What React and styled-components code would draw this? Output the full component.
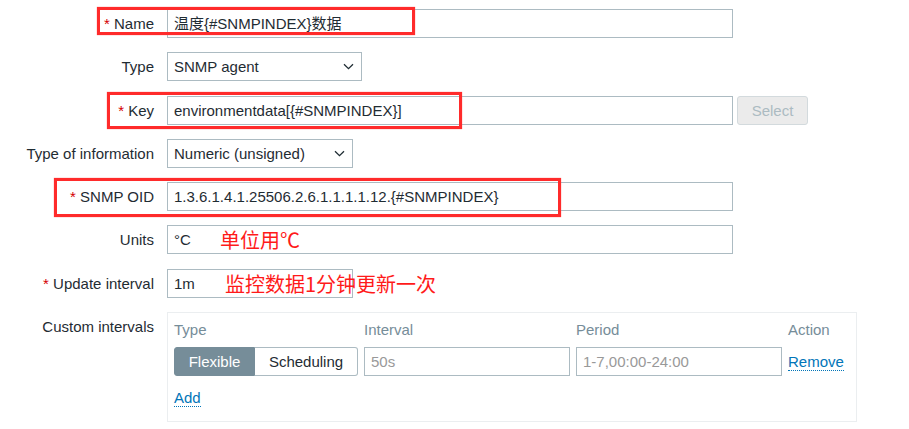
import React from "react";
import styled, { createGlobalStyle } from "styled-components";

const GlobalStyle = createGlobalStyle`
  body {
    margin: 0;
    background: #ffffff;
    font-family: "Liberation Sans", Arial, "Noto Sans CJK SC", sans-serif;
    font-size: 15px;
    color: #1f2c33;
  }
`;

const Chevron = () => (
  <svg width="11" height="7" viewBox="0 0 11 7">
    <path d="M1 1.2 L5.5 5.6 L10 1.2" fill="none" stroke="#1f2c33" strokeWidth="1.3" />
  </svg>
);

export default function App() {
  return (
    <>
      <GlobalStyle />
      <Form>
        <Row>
          <Label required>Name</Label>
          <Input w={566}>温度{"{#SNMPINDEX}"}数据</Input>
          <Mark left={97} top={-2} w={318} h={28} />
        </Row>
        <Row>
          <Label>Type</Label>
          <Select w={195}>
            SNMP agent
            <Chevron />
          </Select>
        </Row>
        <Row>
          <Label required>Key</Label>
          <Input w={566}>environmentdata[{"{#SNMPINDEX}"}]</Input>
          <Button>Select</Button>
          <Mark left={107} top={-4} w={355} h={37} />
        </Row>
        <Row>
          <Label>Type of information</Label>
          <Select w={186}>
            Numeric (unsigned)
            <Chevron />
          </Select>
        </Row>
        <Row>
          <Label required>SNMP OID</Label>
          <Input w={566}>1.3.6.1.4.1.25506.2.6.1.1.1.1.12.{"{#SNMPINDEX}"}</Input>
          <Mark left={54} top={-4} w={507} h={39} />
        </Row>
        <Row>
          <Label>Units</Label>
          <Input w={566}>°C</Input>
          <Note left={220}>单位用℃</Note>
        </Row>
        <Row>
          <Label required>Update interval</Label>
          <Input w={186}>1m</Input>
          <Note left={225}>监控数据1分钟更新一次</Note>
        </Row>
        <Row top>
          <Label>Custom intervals</Label>
          <Panel>
            <Head>Type</Head>
            <Head>Interval</Head>
            <Head>Period</Head>
            <Head>Action</Head>
            <Segmented>
              <Segment active>Flexible</Segment>
              <Segment>Scheduling</Segment>
            </Segmented>
            <Input w={206} placeholder>50s</Input>
            <Input w={206} placeholder>1-7,00:00-24:00</Input>
            <Cell>
              <Link>Remove</Link>
            </Cell>
            <AddCell>
              <Link>Add</Link>
            </AddCell>
          </Panel>
        </Row>
      </Form>
    </>
  );
}

const Form = styled.div`
  display: flex;
  flex-direction: column;
  gap: 14.3px;
  padding-top: 9px;
`;

const Row = styled.div`
  position: relative;
  display: flex;
  align-items: ${(p) => (p.top ? "flex-start" : "center")};
  gap: 4px;
  height: ${(p) => (p.top ? "auto" : "29px")};
`;

const Label = styled.div`
  width: 154px;
  margin-right: 9px;
  flex-shrink: 0;
  text-align: right;
  line-height: 29px;
  white-space: nowrap;
  &::before {
    content: ${(p) => (p.required ? '"* "' : '""')};
    color: #d40000;
  }
`;

const Input = styled.div`
  box-sizing: border-box;
  width: ${(p) => p.w}px;
  height: 29px;
  border: 1px solid #acbbc2;
  padding: 0 6px;
  line-height: 27px;
  white-space: nowrap;
  overflow: hidden;
  color: ${(p) => (p.placeholder ? "#999999" : "#1f2c33")};
  background: #ffffff;
`;

const Select = styled(Input)`
  display: flex;
  align-items: center;
  justify-content: space-between;
  padding: 0 7px 0 6px;
`;

const Button = styled.div`
  box-sizing: border-box;
  width: 71px;
  height: 29px;
  line-height: 27px;
  text-align: center;
  background: #ebebeb;
  border: 1px solid #d3dadd;
  border-radius: 3px;
  color: #acbbc2;
`;

const Mark = styled.div`
  position: absolute;
  left: ${(p) => p.left}px;
  top: ${(p) => p.top}px;
  width: ${(p) => p.w}px;
  height: ${(p) => p.h}px;
  box-sizing: border-box;
  border: 3px solid #ff2b2b;
  box-shadow: 0 0 1px #ff6a6a;
  pointer-events: none;
`;

const Note = styled.div`
  position: absolute;
  left: ${(p) => p.left}px;
  top: 0;
  line-height: 29px;
  font-family: "Noto Sans CJK SC", sans-serif;
  font-size: 20px;
  color: #ff1a1a;
  white-space: nowrap;
`;

const Panel = styled.div`
  box-sizing: border-box;
  width: 690px;
  height: 110px;
  border: 1px solid #ebeef0;
  padding: 8px 6px 0 6px;
  display: grid;
  grid-template-columns: 184px 206px 206px auto;
  grid-template-rows: 18px 29px 18px;
  column-gap: 6px;
  row-gap: 8px;
  align-items: center;
`;

const Head = styled.div`
  color: #768d99;
  line-height: 18px;
`;

const Segmented = styled.div`
  display: flex;
  height: 29px;
`;

const Segment = styled.div`
  box-sizing: border-box;
  height: 29px;
  line-height: 27px;
  text-align: center;
  width: ${(p) => (p.active ? "81px" : "103px")};
  background: ${(p) => (p.active ? "#768d99" : "#ffffff")};
  color: ${(p) => (p.active ? "#ffffff" : "#1f2c33")};
  border: 1px solid ${(p) => (p.active ? "#768d99" : "#acbbc2")};
  border-radius: ${(p) => (p.active ? "3px 0 0 3px" : "0 3px 3px 0")};
  border-left-width: ${(p) => (p.active ? "1px" : "0")};
`;

const Cell = styled.div``;

const AddCell = styled.div`
  grid-column: 1 / -1;
  margin-top: 9px;
`;

const Link = styled.span`
  color: #0275b8;
  border-bottom: 1px dotted #0275b8;
  line-height: 17px;
`;
